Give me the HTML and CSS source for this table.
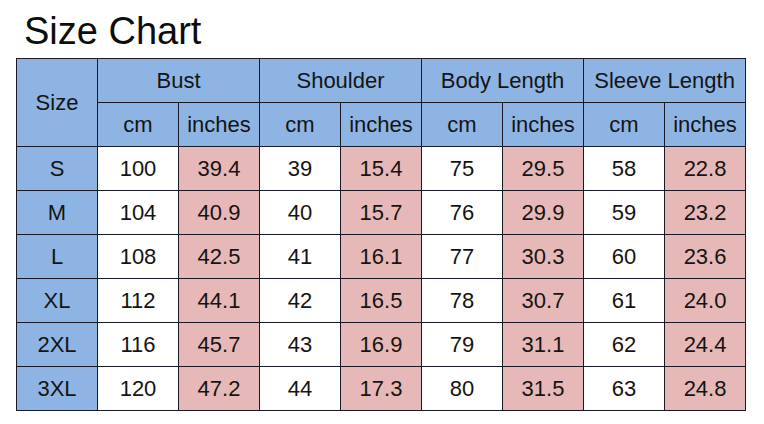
FILE: index.html
```html
<!DOCTYPE html>
<html lang="en">
<head>
<meta charset="utf-8">
<title>Size Chart</title>
<link rel="stylesheet" href="styles.css">
</head>
<body>
<div class="page">
  <h1 class="title">Size Chart</h1>
  <table class="chart">
    <colgroup>
      <col class="c"><col class="c"><col class="c"><col class="c"><col class="c"><col class="c"><col class="c"><col class="c"><col class="c">
    </colgroup>
    <thead>
      <tr>
        <th rowspan="2" class="hd">Size</th>
        <th colspan="2" class="hd">Bust</th>
        <th colspan="2" class="hd">Shoulder</th>
        <th colspan="2" class="hd">Body Length</th>
        <th colspan="2" class="hd">Sleeve Length</th>
      </tr>
      <tr>
        <th class="hd">cm</th><th class="hd">inches</th>
        <th class="hd">cm</th><th class="hd">inches</th>
        <th class="hd">cm</th><th class="hd">inches</th>
        <th class="hd">cm</th><th class="hd">inches</th>
      </tr>
    </thead>
    <tbody>
      <tr><th class="hd">S</th><td>100</td><td class="in">39.4</td><td>39</td><td class="in">15.4</td><td>75</td><td class="in">29.5</td><td>58</td><td class="in">22.8</td></tr>
      <tr><th class="hd">M</th><td>104</td><td class="in">40.9</td><td>40</td><td class="in">15.7</td><td>76</td><td class="in">29.9</td><td>59</td><td class="in">23.2</td></tr>
      <tr><th class="hd">L</th><td>108</td><td class="in">42.5</td><td>41</td><td class="in">16.1</td><td>77</td><td class="in">30.3</td><td>60</td><td class="in">23.6</td></tr>
      <tr><th class="hd">XL</th><td>112</td><td class="in">44.1</td><td>42</td><td class="in">16.5</td><td>78</td><td class="in">30.7</td><td>61</td><td class="in">24.0</td></tr>
      <tr><th class="hd">2XL</th><td>116</td><td class="in">45.7</td><td>43</td><td class="in">16.9</td><td>79</td><td class="in">31.1</td><td>62</td><td class="in">24.4</td></tr>
      <tr><th class="hd">3XL</th><td>120</td><td class="in">47.2</td><td>44</td><td class="in">17.3</td><td>80</td><td class="in">31.5</td><td>63</td><td class="in">24.8</td></tr>
    </tbody>
  </table>
</div>
</body>
</html>
```
FILE: styles.css
```css
html, body {
  margin: 0;
  padding: 0;
  background: #ffffff;
}
.page {
  padding: 9px 0 0 16px;
  font-family: "Liberation Sans", Arial, sans-serif;
  color: #111111;
}
.title {
  margin: 0 0 5px 8px;
  font-size: 38px;
  line-height: 44px;
  font-weight: normal;
  color: #0d0d0d;
}
.chart {
  border-collapse: collapse;
  table-layout: fixed;
  width: 730px;
}
.chart .c {
  width: 81px;
}
.chart th,
.chart td {
  border: 1px solid #1a1a26;
  height: 42px;
  padding: 1px 0 0;
  text-align: center;
  vertical-align: middle;
  font-size: 22px;
  font-weight: normal;
  color: #141414;
}
.chart tr {
  height: 44px;
}
.chart .hd {
  background: #8eb4e3;
}
.chart td {
  background: #ffffff;
}
.chart td.in {
  background: #e6b9b8;
}
```
